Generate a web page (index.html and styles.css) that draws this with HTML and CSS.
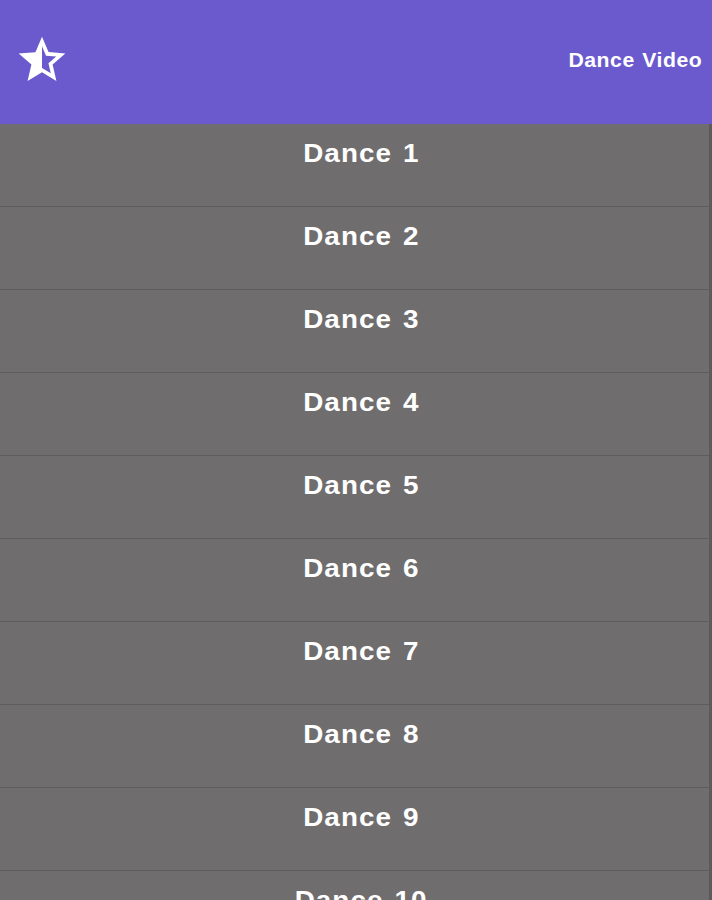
FILE: index.html
```html
<!DOCTYPE html>
<html>
<head>
<meta charset="utf-8">
<link rel="stylesheet" href="styles.css">
</head>
<body>
<header class="topbar">
  <svg class="star" viewBox="0 0 24 24" aria-hidden="true">
    <path fill="#fff" d="M22 9.24l-7.19-.62L12 2 9.19 8.63 2 9.24l5.46 4.73L5.82 21 12 17.27 18.18 21l-1.63-7.03L22 9.24zM12 15.4V6.1l1.71 4.04 4.38.38-3.32 2.88 1 4.28L12 15.4z"/>
  </svg>
  <div class="title">Dance Video</div>
</header>
<ul class="list">
  <li class="item"><span class="label">Dance 1</span></li>
  <li class="item"><span class="label">Dance 2</span></li>
  <li class="item"><span class="label">Dance 3</span></li>
  <li class="item"><span class="label">Dance 4</span></li>
  <li class="item"><span class="label">Dance 5</span></li>
  <li class="item"><span class="label">Dance 6</span></li>
  <li class="item"><span class="label">Dance 7</span></li>
  <li class="item"><span class="label">Dance 8</span></li>
  <li class="item"><span class="label">Dance 9</span></li>
  <li class="item"><span class="label">Dance 10</span></li>
  <li class="item"><span class="label">Dance 11</span></li>
</ul>
</body>
</html>
```
FILE: styles.css
```css
html, body {
  margin: 0;
  padding: 0;
  background: #6f6d6e;
  overflow: hidden;
  font-family: "Liberation Sans", Arial, sans-serif;
}
.topbar {
  height: 124px;
  background: #6a5acd;
  display: flex;
  align-items: center;
  justify-content: space-between;
  padding: 0 10px 0 14px;
  box-sizing: border-box;
}
.star {
  width: 56px;
  height: 56px;
  margin-top: -4px;
}
.title {
  color: #fff;
  font-weight: bold;
  font-size: 20px;
  letter-spacing: 0.5px;
  word-spacing: 1px;
  transform: scaleX(1.06);
  transform-origin: right center;
  margin-top: -4px;
}
.list {
  list-style: none;
  margin: 0;
  padding: 0;
  border-right: 3px solid #5c5a5b;
}
.item {
  box-sizing: border-box;
  height: 83px;
  padding: 14px 0 0 14px;
  line-height: 30px;
  text-align: center;
  border-bottom: 1px solid #5e5c5d;
}
.label {
  display: inline-block;
  color: #fff;
  font-weight: bold;
  font-size: 26px;
  letter-spacing: 1px;
  word-spacing: 2px;
  transform: scaleX(1.07);
}
```
